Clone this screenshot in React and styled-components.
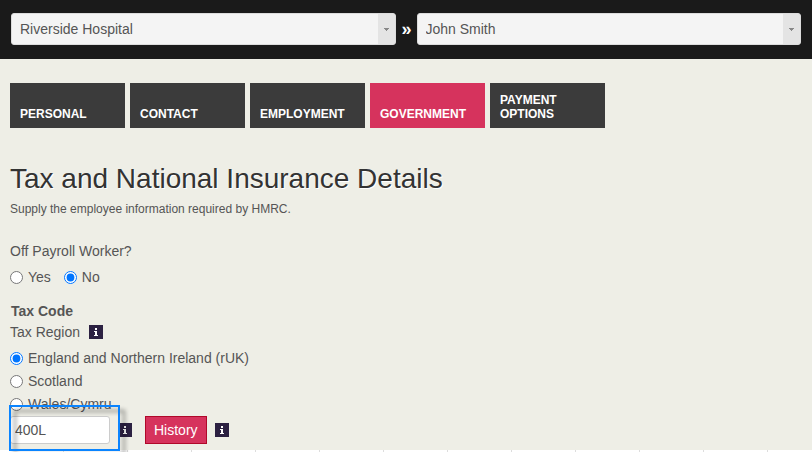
import React, { useState } from 'react';
import styled, { createGlobalStyle } from 'styled-components';

const GlobalStyle = createGlobalStyle`
  *, *::before, *::after { box-sizing: border-box; }
  body {
    margin: 0;
    background: #eeeee6;
    color: #555;
    font-family: "Liberation Sans", Arial, sans-serif;
    font-size: 14px;
    line-height: 20px;
    overflow: hidden;
  }
`;

const TopBar = styled.header`
  display: grid;
  grid-template-columns: 1fr 21px 1fr;
  align-items: center;
  padding: 13px 11px 14px;
  background: #1a1a1a;
`;

const Separator = styled.span`
  color: #fff;
  font-size: 18px;
  font-weight: bold;
  text-align: center;
  padding-left: 1px;
`;

const PickerWrap = styled.div`
  position: relative;
  display: grid;
`;

const PickerSelect = styled.select`
  appearance: none;
  width: 100%;
  height: 32px;
  margin: 0;
  padding: 0 24px 0 8px;
  border: 1px solid #dcdcdc;
  border-radius: 3px;
  background: linear-gradient(#e4e4e4, #e4e4e4) right / 17px 100% no-repeat #f4f4f4;
  color: #555;
  font: inherit;
`;

const PickerArrow = styled.svg`
  position: absolute;
  right: 7px;
  top: 15px;
  pointer-events: none;
`;

const Tabs = styled.nav`
  display: flex;
  flex-wrap: wrap;
  gap: 5px;
  padding: 24px 10px 0;
`;

const Tab = styled.a`
  display: flex;
  align-items: flex-end;
  width: 115px;
  height: 45px;
  padding: 0 10px 7px;
  background: ${(p) => (p.$active ? '#d6335d' : '#3b3b3b')};
  color: #fff;
  font-size: 12px;
  font-weight: bold;
  line-height: 14px;
  text-decoration: none;
  text-transform: uppercase;
`;

const Content = styled.main`
  padding: 31px 10px 0;
`;

const Title = styled.h1`
  margin: 0;
  color: #333;
  font-size: 28px;
  font-weight: normal;
  line-height: 40px;
  text-shadow: 1px 1px 0 #fff;
`;

const Intro = styled.p`
  margin: 0;
  font-size: 12px;
`;

const Group = styled.fieldset`
  margin: 0;
  padding: 0;
  border: 0;
  min-width: 0;
`;

const WorkerGroup = styled(Group)`
  padding-top: 22px;
`;

const Legend = styled.legend`
  float: left;
  width: 100%;
  padding: 0;
`;

const Options = styled.div`
  clear: both;
  display: flex;
  flex-direction: ${(p) => (p.$inline ? 'row' : 'column')};
  gap: ${(p) => (p.$inline ? '13px' : '3px')};
  padding-top: 6px;
`;

const Option = styled.label`
  display: flex;
  align-items: center;
  gap: 5px;
`;

const Radio = styled.input`
  width: 13px;
  height: 13px;
  margin: 0;
  accent-color: #0075ff;
`;

const SectionTitle = styled.h2`
  margin: 14px 0 0;
  padding-left: 1px;
  font-size: 14px;
  line-height: 21px;
`;

const LegendRow = styled.span`
  display: flex;
  align-items: center;
  gap: 9px;
`;

const InfoButton = styled.button`
  display: grid;
  width: 14px;
  height: 14px;
  padding: 0;
  border: 0;
  background: #2c2142;
`;

const CodeRow = styled.div`
  display: flex;
  align-items: center;
  padding-top: 2px;
`;

const CodeField = styled.div`
  position: relative;
  width: 100px;
  margin-right: 8px;
`;

const CodeInput = styled.input`
  display: block;
  width: 100%;
  height: 28px;
  padding: 0 4px;
  border: 1px solid #ccc;
  border-radius: 3px;
  background: #fff;
  color: #555;
  font: inherit;
`;

const Highlight = styled.span`
  position: absolute;
  z-index: 1;
  inset: -11px -10px -7px -1px;
  border: 2px solid #0a84ff;
  filter: drop-shadow(5px 5px 2px rgba(0, 0, 0, 0.45));
  pointer-events: none;
`;

const HistoryButton = styled.button`
  height: 28px;
  margin: 0 8px 0 13px;
  padding: 0 8px;
  border: 1px solid #b0082a;
  background: #d6335d;
  color: #fff;
  font: inherit;
`;

const Grid = styled.div`
  height: 20px;
  margin-top: 6px;
  background: repeating-linear-gradient(90deg, #fff 0 63px, #ddd 63px 64px);
`;

function Picker({ label, value }) {
  return (
    <PickerWrap>
      <PickerSelect aria-label={label} defaultValue={value}>
        <option>{value}</option>
      </PickerSelect>
      <PickerArrow width="5" height="3" viewBox="0 0 5 3" shapeRendering="crispEdges" aria-hidden="true">
        <path d="M0 0h5v1H4v1H3v1H2V2H1V1H0z" fill="#888" />
      </PickerArrow>
    </PickerWrap>
  );
}

function Info({ label }) {
  return (
    <InfoButton type="button" aria-label={label}>
      <svg width="14" height="14" viewBox="0 0 14 14" shapeRendering="crispEdges">
        <path d="M6 3h2v2H6zM5 6h3v4h1v1H5v-1h1V7H5z" fill="#fff" />
      </svg>
    </InfoButton>
  );
}

function Choices({ name, items, initial, inline }) {
  const [selected, setSelected] = useState(initial);
  return (
    <Options $inline={inline}>
      {items.map((item) => (
        <Option key={item}>
          <Radio
            type="radio"
            name={name}
            checked={selected === item}
            onChange={() => setSelected(item)}
          />
          {item}
        </Option>
      ))}
    </Options>
  );
}

const tabs = ['Personal', 'Contact', 'Employment', 'Government', 'Payment Options'];

export default function App() {
  return (
    <>
      <GlobalStyle />
      <TopBar>
        <Picker label="Company" value="Riverside Hospital" />
        <Separator>»</Separator>
        <Picker label="Employee" value="John Smith" />
      </TopBar>
      <Tabs>
        {tabs.map((tab) => (
          <Tab key={tab} href="#" $active={tab === 'Government'}>
            {tab}
          </Tab>
        ))}
      </Tabs>
      <Content>
        <Title>Tax and National Insurance Details</Title>
        <Intro>Supply the employee information required by HMRC.</Intro>
        <WorkerGroup>
          <Legend>Off Payroll Worker?</Legend>
          <Choices name="worker" items={['Yes', 'No']} initial="No" inline />
        </WorkerGroup>
        <SectionTitle>Tax Code</SectionTitle>
        <Group>
          <Legend>
            <LegendRow>
              Tax Region
              <Info label="About tax region" />
            </LegendRow>
          </Legend>
          <Choices
            name="region"
            items={['England and Northern Ireland (rUK)', 'Scotland', 'Wales/Cymru']}
            initial="England and Northern Ireland (rUK)"
          />
        </Group>
        <CodeRow>
          <CodeField>
            <CodeInput aria-label="Tax code" defaultValue="400L" />
            <Highlight />
          </CodeField>
          <Info label="About tax code" />
          <HistoryButton type="button">History</HistoryButton>
          <Info label="About history" />
        </CodeRow>
      </Content>
      <Grid />
    </>
  );
}
